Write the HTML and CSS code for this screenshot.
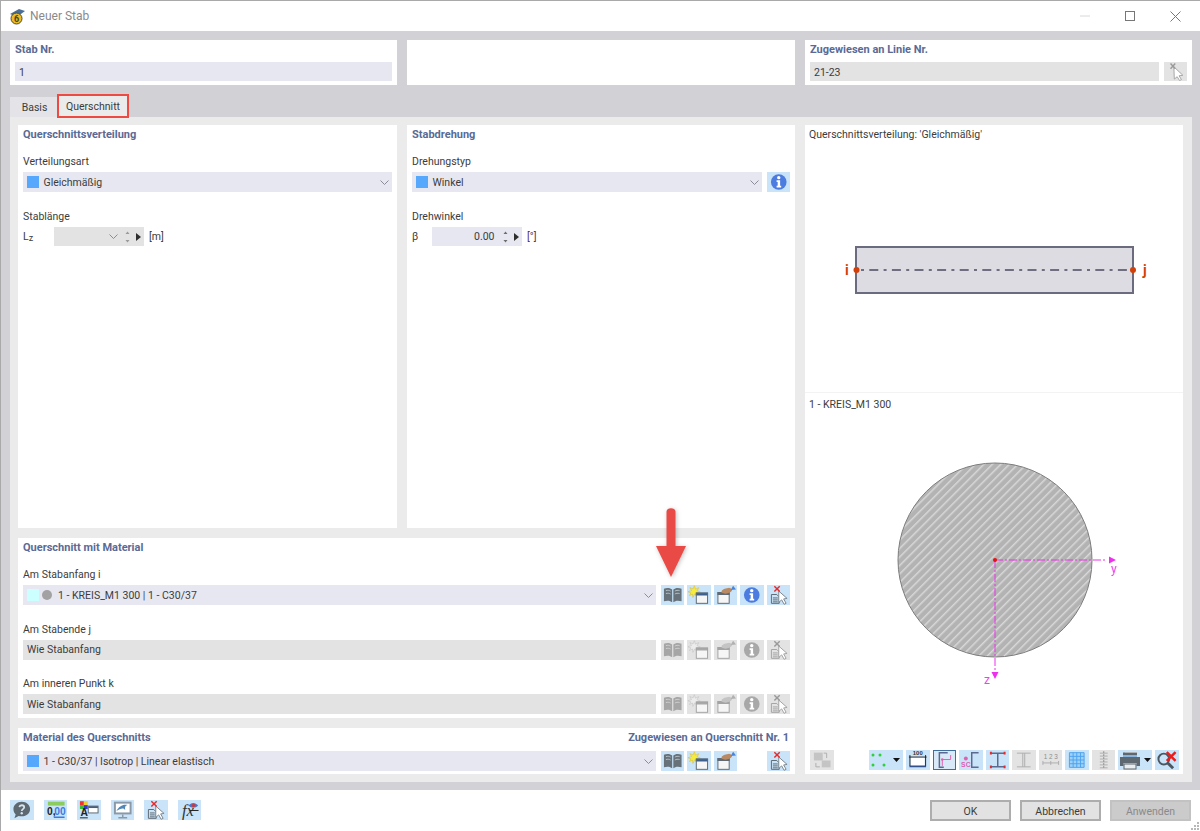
FILE: index.html
```html
<!DOCTYPE html>
<html lang="de">
<head>
<meta charset="utf-8">
<title>Neuer Stab</title>
<link rel="stylesheet" href="styles.css">
</head>
<body>
<svg class="defs" width="0" height="0">
  <symbol id="i-book" viewBox="0 0 24 20">
    <path class="d" d="M3 3.5C6 2.5 9.5 2.5 11.4 4.5V17.5C9.5 15.6 6 15.5 3 16.5Z"/>
    <path class="d" d="M12.6 4.5C14.5 2.5 18 2.5 21 3.5V16.5C18 15.5 14.5 15.6 12.6 17.5Z"/>
    <path class="l" d="M5 5.5C7 5 8.5 5.2 9.8 6M5 8.5C7 8 8.5 8.2 9.8 9M19 5.5C17 5 15.5 5.2 14.2 6M19 8.5C17 8 15.5 8.2 14.2 9"/>
  </symbol>
  <symbol id="i-new" viewBox="0 0 24 20">
    <path class="y" d="M7.5 0.5L8.6 4 12 2.5 10.2 5.6 13.6 7 10 7.800 10.6 11.4 7.800 9 6 12.500 5.600 9 2.600 10.500 4 7.800 1 6.700 4.600 5.500 3 2.400 6.200 3.900Z"/>
    <rect class="w" x="9.5" y="8" width="11.5" height="10.5"/>
    <rect class="n" x="9" y="7.5" width="12.500" height="3"/>
    <rect class="o" x="9.5" y="8" width="11.500" height="10.500"/>
  </symbol>
  <symbol id="i-edit" viewBox="0 0 24 20">
    <rect class="w" x="4" y="7.500" width="11.500" height="11"/>
    <rect class="o" x="4" y="7.500" width="11.500" height="11"/>
    <rect class="o2" x="3.500" y="7" width="12.500" height="3"/>
    <path class="h" d="M8 5.500C10 3 14 3 16.500 2.500L18.500 5.500C17 8 13 9 10.500 8.500L7.500 7.500Z"/>
    <path class="b" d="M17 5L19.500 0.500L22.500 4.500Z"/>
  </symbol>
  <symbol id="i-info" viewBox="0 0 24 20">
    <circle class="inf" cx="12" cy="10" r="8"/>
    <circle class="wf" cx="12" cy="5.600" r="1.700"/>
    <path class="wf" d="M9.800 8.300H13.400V13.800H14.500V15.500H9.800V13.800H10.900V10H9.800Z"/>
  </symbol>
  <symbol id="i-del" viewBox="0 0 24 20">
    <path class="w o" d="M4.500 9.500H10L12.500 12V18.500H4.500Z"/>
    <path class="o" d="M6 13H11M6 15H11M6 17H11"/>
    <path class="wc" d="M12 6L20.500 13.500 17 14 19.500 18.500 17.500 19.500 15 15 12 17.500Z"/>
    <path class="x" d="M7.500 1L13 6.500M13 1L7.500 6.500"/>
  </symbol>
  <symbol id="i-pick" viewBox="0 0 24 20">
    <path class="wc" d="M10 5L19.500 14 15.500 14.500 18 18.500 16 19.500 13.500 15.500 10.500 18Z"/>
    <path class="x" d="M6.500 1.500L11.500 7M11.500 1.500L6.500 7"/>
  </symbol>
  <symbol id="i-transfer" viewBox="0 0 24 20">
    <rect class="gf" x="4" y="2.500" width="9" height="8"/>
    <rect class="gf" x="12" y="10.500" width="9" height="7"/>
    <path class="gl" d="M6 13V17H10M17 8V3H14"/>
  </symbol>
  <symbol id="i-size" viewBox="0 0 24 20">
    <rect class="wf" x="5" y="7" width="14" height="9"/>
    <path class="nl" d="M3.500 16.500H20.500"/>
    <path class="k" d="M4 5V16M20 5V16M3 7H21"/>
    <text class="tiny" x="12" y="5">100</text>
  </symbol>
  <symbol id="i-axes" viewBox="0 0 24 20">
    <path class="c" d="M15 2.500H6.500V17.500H11"/>
    <path class="pk" d="M9.500 9.500H18M18 5V9.500M9.500 9.500V16"/>
    <circle class="pf" cx="9.500" cy="9.500" r="1.300"/>
  </symbol>
  <symbol id="i-sc" viewBox="0 0 24 20">
    <path class="c" d="M20 2.500H13V17.500H20"/>
    <circle class="pf" cx="7" cy="8.500" r="2"/>
    <text class="tinyp" x="7" y="17">SC</text>
  </symbol>
  <symbol id="i-ibeam" viewBox="0 0 24 20">
    <path class="c" d="M5 3H19M5 17H19M12 3V17"/>
    <path class="r" d="M5 1.500V4.500M19 1.500V4.500M5 15.500V18.500M19 15.500V18.500"/>
  </symbol>
  <symbol id="i-ibeam-off" viewBox="0 0 24 20">
    <path class="gl" d="M5 3H19M5 17H19M11 3V17M13 3V17"/>
  </symbol>
  <symbol id="i-num" viewBox="0 0 24 20">
    <text class="tinyg" x="12" y="9">1 2 3</text>
    <path class="gl" d="M4 13H20M4 11V15M20 11V15M12 11V15"/>
  </symbol>
  <symbol id="i-grid" viewBox="0 0 24 20">
    <path class="bl" d="M4.500 2.500H19.500V17.500H4.500ZM4.500 6.300H19.500M4.500 10H19.500M4.500 13.800H19.500M8.300 2.500V17.500M12 2.500V17.500M15.800 2.500V17.500"/>
  </symbol>
  <symbol id="i-list" viewBox="0 0 24 20">
    <path class="gl" d="M8 3H16M8 6H16M8 9H16M8 12H16M8 15H16M8 18H16"/>
    <path class="gd" d="M12 1V19"/>
  </symbol>
  <symbol id="i-print" viewBox="0 0 24 20">
    <rect class="wf" x="7" y="2" width="12" height="7"/>
    <path class="dk" d="M5 2.500H19V7H22V16H18.500V13H5.500V16H2V7H5Z"/>
    <rect class="lg" x="6" y="14" width="12" height="5"/>
    <rect class="lb" x="5" y="5" width="14" height="2"/>
  </symbol>
  <symbol id="i-findx" viewBox="0 0 24 20">
    <circle class="ln" cx="9" cy="9" r="5.500"/>
    <path class="ln2" d="M13 13L18.500 18.500"/>
    <path class="x2" d="M12 2L21 11M21 2L12 11"/>
  </symbol>
  <symbol id="i-help" viewBox="0 0 24 20">
    <path class="dk" d="M12 1.500C17 1.500 20.500 4.800 20.500 9C20.500 13.200 17 16.500 12 16.500C10.800 16.500 9.800 16.300 8.800 16L4.500 18.500L5.800 14.500C4.300 13 3.500 11.200 3.500 9C3.500 4.800 7 1.500 12 1.500Z"/>
    <path class="qm" d="M9.500 7C10 4.500 14.500 4.500 14.500 7.200C14.500 9.200 12 9 12 11"/>
    <circle class="lg2" cx="12" cy="13.300" r="1.200"/>
  </symbol>
  <symbol id="i-zero" viewBox="0 0 24 20">
    <rect class="gr" x="4" y="1.500" width="17" height="4"/>
    <text class="z1" x="3" y="15">0,</text>
    <text class="z2" x="10.500" y="15">00</text>
    <path class="bl2" d="M10 17.500H21"/>
  </symbol>
  <symbol id="i-color" viewBox="0 0 24 20">
    <rect class="c-r" x="3" y="1" width="4" height="4"/>
    <rect class="c-y" x="7" y="1" width="4" height="4"/>
    <rect class="c-g" x="3" y="5" width="4" height="4"/>
    <rect class="c-b" x="7" y="5" width="4" height="4"/>
    <text class="z1" x="3.500" y="16">A</text>
    <rect class="wf" x="11.500" y="6" width="10" height="7"/>
    <rect class="n" x="11.500" y="6" width="10" height="2"/>
    <rect class="o" x="11.500" y="6" width="10" height="7"/>
    <path class="k" d="M3 18H11"/>
  </symbol>
  <symbol id="i-screen" viewBox="0 0 24 20">
    <rect class="scr" x="3" y="1.500" width="18" height="13"/>
    <rect class="wf" x="5" y="3.500" width="14" height="9"/>
    <path class="b2" d="M5.500 11C8 6 13 3.500 17 5C15 5.500 14 6.500 14.500 10C13 7.500 10 8 5.500 11Z"/>
    <path class="scrl" d="M12 14.500V17.500M7.500 18H16.500"/>
  </symbol>
  <symbol id="i-fx" viewBox="0 0 24 20">
    <text class="fxt" x="4" y="16">fx</text>
    <path class="eye" d="M11 5.500C13 2 18 2 20.500 5.500C18 8.500 13 8.500 11 5.500Z"/>
    <circle class="pup" cx="15.800" cy="5.300" r="1.700"/>
    <path class="k" d="M12 10.500H21"/>
  </symbol>
</svg>

<div class="window">
  <header class="titlebar">
    <svg class="logo" viewBox="0 0 17 17" width="17" height="17">
      <path class="logo-hat" d="M1 6L10 1L16 3L8 9Z"/>
      <circle class="logo-coin" cx="7.500" cy="10.500" r="5.500"/>
      <text class="logo-six" x="7.500" y="14">6</text>
    </svg>
    <span class="title-text">Neuer Stab</span>
    <div class="win-ctrls">
      <svg class="win-min" width="10" height="10" viewBox="0 0 10 10"><path d="M0 5H10"/></svg>
      <svg class="win-max" width="10" height="10" viewBox="0 0 10 10"><rect x="0.500" y="0.500" width="9" height="9"/></svg>
      <svg class="win-close" width="11" height="11" viewBox="0 0 11 11"><path d="M0.500 0.500L10.500 10.500M10.500 0.500L0.500 10.500"/></svg>
    </div>
  </header>

  <main class="main">
    <section class="top-row">
      <div class="panel">
        <h2 class="panel-title">Stab Nr.</h2>
        <div class="field field-top"><span>1</span></div>
      </div>
      <div class="panel"></div>
      <div class="panel">
        <h2 class="panel-title">Zugewiesen an Linie Nr.</h2>
        <div class="row">
          <div class="field field-top field-off"><span>21-23</span></div>
          <button class="ib ib-top off"><svg><use href="#i-pick"/></svg></button>
        </div>
      </div>
    </section>

    <nav class="tabs">
      <div class="tab">Basis</div>
      <div class="tab tab-active">Querschnitt</div>
    </nav>

    <section class="page">
      <div class="panel">
        <h2 class="panel-title">Querschnittsverteilung</h2>
        <div class="group">
          <label class="lbl">Verteilungsart</label>
          <div class="field">
            <i class="swatch"></i><span>Gleichmäßig</span>
            <svg class="chev" viewBox="0 0 9 5"><path d="M0.500 0.500L4.500 4.500L8.500 0.500"/></svg>
          </div>
        </div>
        <div class="group">
          <label class="lbl">Stablänge</label>
          <div class="row">
            <span class="sym sym-l">L<sub>z</sub></span>
            <div class="num num-off">
              <span class="num-val"></span>
              <svg class="chev chev-num" viewBox="0 0 9 5"><path d="M0.500 0.500L4.500 4.500L8.500 0.500"/></svg>
              <svg class="spin" viewBox="0 0 5 12"><path d="M2.500 0.500L4.500 3H0.500ZM2.500 11.500L0.500 9H4.500Z"/></svg>
              <svg class="play" viewBox="0 0 5 8"><path d="M0 0L5 4L0 8Z"/></svg>
            </div>
            <span class="unit">[m]</span>
          </div>
        </div>
      </div>

      <div class="panel">
        <h2 class="panel-title">Stabdrehung</h2>
        <div class="group">
          <label class="lbl">Drehungstyp</label>
          <div class="row">
            <div class="field">
              <i class="swatch"></i><span>Winkel</span>
              <svg class="chev" viewBox="0 0 9 5"><path d="M0.500 0.500L4.500 4.500L8.500 0.500"/></svg>
            </div>
            <button class="ib"><svg><use href="#i-info"/></svg></button>
          </div>
        </div>
        <div class="group">
          <label class="lbl">Drehwinkel</label>
          <div class="row">
            <span class="sym">β</span>
            <div class="num">
              <span class="num-val">0.00</span>
              <svg class="spin" viewBox="0 0 5 12"><path d="M2.500 0.500L4.500 3H0.500ZM2.500 11.500L0.500 9H4.500Z"/></svg>
              <svg class="play" viewBox="0 0 5 8"><path d="M0 0L5 4L0 8Z"/></svg>
            </div>
            <span class="unit unit-deg">[°]</span>
          </div>
        </div>
      </div>

      <aside class="panel preview">
        <div class="preview-top">
          <div class="preview-label">Querschnittsverteilung: 'Gleichmäßig'</div>
          <svg class="drawing" width="378" height="250" viewBox="0 0 378 250">
            <rect class="bar" x="51" y="104" width="277" height="46"/>
            <path class="bar-axis" d="M56 127H326"/>
            <circle class="node" cx="51.500" cy="127" r="3"/>
            <circle class="node" cx="328" cy="127" r="3"/>
            <text class="node-lbl" x="40" y="132">i</text>
            <text class="node-lbl" x="338" y="132">j</text>
          </svg>
        </div>
        <div class="preview-bottom">
          <div class="preview-label">1 - KREIS_M1 300</div>
          <svg class="drawing" width="378" height="336" viewBox="0 0 378 336">
            <defs>
              <pattern id="hatch" width="6" height="8" patternUnits="userSpaceOnUse" patternTransform="rotate(45)">
                <rect width="6" height="8" fill="#b3b3b3"/>
                <rect width="1.500" height="8" fill="#d8d8d8"/>
              </pattern>
            </defs>
            <circle class="section" cx="190" cy="147" r="97"/>
            <path class="axis" d="M190 147H302M190 147V258"/>
            <path class="axis-head" d="M304 143.500L311 147L304 150.500ZM186.500 259L190 266L193.500 259Z"/>
            <circle class="centroid" cx="190" cy="147" r="2"/>
            <text class="axis-lbl" x="306" y="160">y</text>
            <text class="axis-lbl" x="179" y="271">z</text>
          </svg>
          <div class="toolbar">
            <button class="ib off"><svg><use href="#i-transfer"/></svg></button>
            <button class="ib ib-wide push">
              <svg class="dots" viewBox="0 0 24 20"><circle cx="4" cy="5" r="1.500"/><circle cx="11" cy="5" r="1.500"/><circle cx="4" cy="15" r="1.500"/><circle cx="15" cy="15" r="1.500"/></svg>
              <svg class="caret" viewBox="0 0 7 4"><path d="M0 0H7L3.500 4Z"/></svg>
            </button>
            <button class="ib"><svg><use href="#i-size"/></svg></button>
            <button class="ib ib-on"><svg><use href="#i-axes"/></svg></button>
            <button class="ib"><svg><use href="#i-sc"/></svg></button>
            <button class="ib"><svg><use href="#i-ibeam"/></svg></button>
            <button class="ib off"><svg><use href="#i-ibeam-off"/></svg></button>
            <button class="ib off"><svg><use href="#i-num"/></svg></button>
            <button class="ib"><svg><use href="#i-grid"/></svg></button>
            <button class="ib off"><svg><use href="#i-list"/></svg></button>
            <button class="ib ib-wide">
              <svg class="print-ic"><use href="#i-print"/></svg>
              <svg class="caret" viewBox="0 0 7 4"><path d="M0 0H7L3.500 4Z"/></svg>
            </button>
            <button class="ib"><svg><use href="#i-findx"/></svg></button>
          </div>
        </div>
      </aside>

      <div class="panel wide sect">
        <h2 class="panel-title">Querschnitt mit Material</h2>
        <div class="group">
          <label class="lbl">Am Stabanfang i</label>
          <div class="row">
            <div class="field">
              <i class="swatch swatch-cyan"></i><i class="dot"></i><span>1 - KREIS_M1 300 | 1 - C30/37</span>
              <svg class="chev" viewBox="0 0 9 5"><path d="M0.500 0.500L4.500 4.500L8.500 0.500"/></svg>
            </div>
            <div class="btns">
              <button class="ib"><svg><use href="#i-book"/></svg></button>
              <button class="ib"><svg><use href="#i-new"/></svg></button>
              <button class="ib"><svg><use href="#i-edit"/></svg></button>
              <button class="ib"><svg><use href="#i-info"/></svg></button>
              <button class="ib"><svg><use href="#i-del"/></svg></button>
            </div>
          </div>
        </div>
        <div class="group">
          <label class="lbl">Am Stabende j</label>
          <div class="row">
            <div class="field field-off"><span>Wie Stabanfang</span></div>
            <div class="btns">
              <button class="ib off"><svg><use href="#i-book"/></svg></button>
              <button class="ib off"><svg><use href="#i-new"/></svg></button>
              <button class="ib off"><svg><use href="#i-edit"/></svg></button>
              <button class="ib off"><svg><use href="#i-info"/></svg></button>
              <button class="ib off"><svg><use href="#i-del"/></svg></button>
            </div>
          </div>
        </div>
        <div class="group">
          <label class="lbl">Am inneren Punkt k</label>
          <div class="row">
            <div class="field field-off"><span>Wie Stabanfang</span></div>
            <div class="btns">
              <button class="ib off"><svg><use href="#i-book"/></svg></button>
              <button class="ib off"><svg><use href="#i-new"/></svg></button>
              <button class="ib off"><svg><use href="#i-edit"/></svg></button>
              <button class="ib off"><svg><use href="#i-info"/></svg></button>
              <button class="ib off"><svg><use href="#i-del"/></svg></button>
            </div>
          </div>
        </div>
      </div>

      <div class="panel wide">
        <div class="title-row">
          <h2 class="panel-title">Material des Querschnitts</h2>
          <h2 class="panel-title">Zugewiesen an Querschnitt Nr. 1</h2>
        </div>
        <div class="row">
          <div class="field">
            <i class="swatch"></i><span>1 - C30/37 | Isotrop | Linear elastisch</span>
            <svg class="chev" viewBox="0 0 9 5"><path d="M0.500 0.500L4.500 4.500L8.500 0.500"/></svg>
          </div>
          <div class="btns">
            <button class="ib"><svg><use href="#i-book"/></svg></button>
            <button class="ib"><svg><use href="#i-new"/></svg></button>
            <button class="ib"><svg><use href="#i-edit"/></svg></button>
            <span class="ib-gap"></span>
            <button class="ib"><svg><use href="#i-del"/></svg></button>
          </div>
        </div>
      </div>
    </section>
  </main>

  <footer class="footer">
    <div class="foot-icons">
      <button class="ib"><svg><use href="#i-help"/></svg></button>
      <button class="ib"><svg><use href="#i-zero"/></svg></button>
      <button class="ib"><svg><use href="#i-color"/></svg></button>
      <button class="ib"><svg><use href="#i-screen"/></svg></button>
      <button class="ib"><svg><use href="#i-del"/></svg></button>
      <button class="ib"><svg><use href="#i-fx"/></svg></button>
    </div>
    <div class="foot-btns">
      <button class="btn">OK</button>
      <button class="btn">Abbrechen</button>
      <button class="btn btn-off">Anwenden</button>
    </div>
  </footer>

  <svg class="callout" width="34" height="74" viewBox="0 0 34 74">
    <path d="M12.500 5.500C12.500 1 21.500 1 21.500 5.500V40H32L17 71L2 40H12.500Z"/>
  </svg>
  <svg class="grip" width="10" height="10" viewBox="0 0 10 10">
    <path d="M7 1h2v2H7zM4 4h2v2H4zM7 4h2v2H7zM1 7h2v2H1zM4 7h2v2H4zM7 7h2v2H7z"/>
  </svg>
</div>
</body>
</html>
```

FILE: styles.css
```css
* { box-sizing: border-box; }
html, body { margin: 0; padding: 0; }
body {
  width: 1200px;
  height: 831px;
  overflow: hidden;
  background: #fff;
  font-family: Roboto, "Noto Sans", sans-serif;
  font-size: 10.500px;
  color: #3c3c3c;
}
.defs { display: none; }

.window {
  position: relative;
  width: 1200px;
  height: 831px;
  display: flex;
  flex-direction: column;
  border-top: 1px solid #a9a9a9;
  border-left: 1px solid #a9a9a9;
  background: #fff;
}

/* Title bar */
.titlebar {
  height: 30px;
  display: flex;
  align-items: center;
  padding-left: 8px;
  flex: none;
}
.logo { flex: none; }
.logo-hat { fill: #4a6f96; }
.logo-coin { fill: #e7bb2c; stroke: #4d4d3a; stroke-width: 1; }
.logo-six { font-size: 9px; font-weight: 700; fill: #4d4020; text-anchor: middle; }
.title-text { margin-left: 4px; font-size: 12px; color: #8a8a8a; }
.win-ctrls {
  margin-left: auto;
  display: flex;
  align-items: center;
  gap: 35px;
  padding-right: 19px;
}
.win-min path { stroke: #d8d8d8; stroke-width: 1; fill: none; }
.win-max rect { stroke: #777; stroke-width: 1; fill: none; }
.win-close path { stroke: #777; stroke-width: 1; fill: none; }

/* Main band */
.main {
  flex: none;
  height: 759px;
  background: #d2d2d6;
  padding: 9px 7px 8px 9px;
  display: flex;
  flex-direction: column;
}
.top-row {
  display: grid;
  grid-template-columns: 387px 388px 387px;
  column-gap: 10px;
  height: 45px;
  flex: none;
  width: 1182px;
}
.panel {
  background: #fff;
  padding: 0 5px;
  min-width: 0;
}
.panel-title {
  margin: 0;
  height: 22px;
  padding-top: 2px;
  line-height: 16px;
  font-size: 11px;
  font-weight: 700;
  color: #5a6a95;
}

/* Tabs */
.tabs {
  flex: none;
  height: 32px;
  display: flex;
  align-items: flex-end;
}
.tab {
  height: 20px;
  width: 47px;
  padding-left: 2px;
  background: #e4e4e8;
  text-align: center;
  line-height: 22px;
  color: #3c3c3c;
}
.tab-active {
  width: 72px;
  height: 24px;
  padding-left: 0;
  margin-bottom: -1px;
  background: #ebebeb;
  border: 2px solid #ee4a44;
  line-height: 22px;
  position: relative;
  z-index: 1;
}

/* Page */
.page {
  flex: none;
  width: 1182px;
  height: 665px;
  background: #ebebeb;
  padding: 8px 9px 8px 8px;
  display: grid;
  grid-template-columns: 379px 388px 378px;
  grid-template-rows: 403px 180px 46px;
  gap: 10px;
}
.wide { grid-column: 1 / span 2; }
.group { margin-top: 16px; }
.sect .group { margin-top: 15.500px; }
.panel-title + .group { margin-top: 6px; }
.lbl {
  display: block;
  height: 16px;
  line-height: 18px;
  margin-bottom: 3px;
  color: #3c3c3c;
}
.row {
  display: flex;
  align-items: center;
  gap: 5px;
}
.field {
  flex: 1;
  min-width: 0;
  height: 20px;
  background: #e7e7f1;
  display: flex;
  align-items: center;
  padding: 0 4px;
  color: #3c3c3c;
}
.field-top { height: 19px; padding-top: 1px; }
.field-off { background: #e3e3e3; }
.swatch {
  flex: none;
  width: 12px;
  height: 12px;
  background: #55a8fb;
  margin-right: 4.500px;
}
.swatch-cyan { background: #ccffff; margin-right: 3px; }
.dot {
  flex: none;
  width: 10px;
  height: 10px;
  border-radius: 50%;
  background: #a2a2a2;
  margin-right: 6px;
}
.chev {
  flex: none;
  margin-left: auto;
  width: 9px;
  height: 5px;
  margin-right: -1px;
}
.chev path { fill: none; stroke: #8b8b99; stroke-width: 1; }
.sym {
  width: 15px;
  flex: none;
}
.sym-l { width: 26px; }
.sym sub { font-size: 9px; line-height: 0; vertical-align: -1px; }
.num {
  width: 90px;
  height: 19px;
  flex: none;
  background: #e7e7f1;
  display: flex;
  align-items: center;
  padding-right: 3.500px;
}
.num-off { background: #e3e3e3; }
.num-val { flex: 1; text-align: right; margin-right: 8px; }
.num-off .num-val { margin-right: 0; }
.num .chev-num { margin-left: 0; margin-right: 7px; }
.spin { width: 5px; height: 12px; flex: none; margin-right: 6px; }
.spin path { fill: #6c6c6c; }
.num-off .spin path { fill: #9a9a9a; }
.play { width: 5px; height: 8px; flex: none; }
.play path { fill: #2e2e2e; }
.unit { color: #3c3c3c; }
.unit-deg { color: #5a3060; }

/* Icon buttons */
.btns { display: flex; gap: 3px; flex: none; }
.ib {
  flex: none;
  width: 23.500px;
  height: 20px;
  padding: 0;
  border: 0;
  background: #c9e3f8;
  display: block;
}
.ib > svg { display: block; width: 100%; height: 100%; }
.ib-top { height: 19px; }
.ib-gap { width: 23.500px; flex: none; }
.ib-on { background: #d9e9f8; outline: 1.500px solid #3f6f9f; outline-offset: -1.500px; }
.ib-wide {
  width: 34px;
  display: flex;
  align-items: center;
}
.ib > svg.dots { width: 24px; height: 20px; flex: none; }
.dots circle { fill: #2ed13a; }
.ib > svg.caret { width: 7px; height: 4px; flex: none; }
.ib > .print-ic + svg.caret { margin-left: 2px; }
.caret path { fill: #111; }
.ib > svg.print-ic { width: 24px; height: 20px; flex: none; }
.off { background: #e3e3e3; }

/* Icon drawing parts */
.d  { fill: var(--dk, #66717a); }
.l  { fill: none; stroke: var(--lt, #b4bec6); stroke-width: 1; }
.y  { fill: var(--yl, #f6ec3a); stroke: var(--yo, #d9b92a); stroke-width: .5; }
.w  { fill: #f6f6f6; }
.wf { fill: #fff; }
.n  { fill: var(--nv, #3c5f8e); }
.o  { fill: none; stroke: var(--gd, #5f6a74); stroke-width: 1; }
.o2 { fill: var(--gd, #5f6a74); }
.h  { fill: var(--hd, #b88962); }
.b  { fill: var(--bu, #4a85d8); }
.inf { fill: var(--in, #4d7ce0); }
.wc { fill: #fff; stroke: var(--gd, #7c8790); stroke-width: 1; }
.x  { fill: none; stroke: var(--rd, #e52b2b); stroke-width: 1.500; }
.off { --dk: #a6a6a6; --lt: #cfcfcf; --yl: #ececec; --yo: #bdbdbd; --nv: #a8a8a8; --gd: #a4a4a4; --hd: #c4c4c4; --bu: #b0b0b0; --in: #a8a8a8; --rd: #9a9a9a; }
.gf { fill: #c4c4c4; }
.gl { fill: none; stroke: #aeaeae; stroke-width: 1; }
.gd { fill: none; stroke: #8e8e8e; stroke-width: 1; stroke-dasharray: 2 1; }
.nl { fill: none; stroke: #34508a; stroke-width: 2; }
.k  { fill: none; stroke: #222; stroke-width: 1; }
.tiny { font-size: 6px; font-weight: 700; fill: #333; text-anchor: middle; }
.tinyp { font-size: 7px; font-weight: 700; fill: #e060b0; text-anchor: middle; }
.tinyg { font-size: 6.500px; fill: #8e8e8e; text-anchor: middle; }
.c  { fill: none; stroke: #5c6a90; stroke-width: 1.500; }
.pk { fill: none; stroke: #e060b0; stroke-width: 1; }
.pf { fill: #e060b0; }
.r  { fill: none; stroke: #e82a2a; stroke-width: 2; }
.bl { fill: #9fd0f8; stroke: #4ea4ee; stroke-width: 1; }
.dk { fill: #5d6870; }
.lg { fill: #e9edf0; stroke: #5d6870; stroke-width: 1; }
.lb { fill: #86b4df; }
.ln { fill: none; stroke: #4b5660; stroke-width: 2; }
.ln2 { fill: none; stroke: #4b5660; stroke-width: 3; }
.x2 { fill: none; stroke: #ea1c1c; stroke-width: 2.500; }
.qm { fill: none; stroke: #d6e3ee; stroke-width: 1.800; }
.lg2 { fill: #d6e3ee; }
.gr { fill: #8ccb5e; }
.z1 { font-size: 10.500px; font-weight: 700; fill: #222; }
.z2 { font-size: 10.500px; font-weight: 700; fill: #3b7be0; }
.bl2 { fill: none; stroke: #3b7be0; stroke-width: 1.500; }
.c-r { fill: #e33; }
.c-y { fill: #ec3; }
.c-g { fill: #3b3; }
.c-b { fill: #33d; }
.scr { fill: #8a99a8; }
.b2 { fill: #4e86b8; }
.scrl { fill: none; stroke: #8a99a8; stroke-width: 1.500; }
.fxt { font-family: "Liberation Serif", serif; font-style: italic; font-size: 17px; fill: #333; }
.eye { fill: #4c78c8; }
.pup { fill: #d33; }

/* Preview panel */
.preview {
  grid-column: 3;
  grid-row: 1 / span 3;
  padding: 0;
  display: flex;
  flex-direction: column;
}
.preview-top {
  flex: none;
  height: 268px;
  border-bottom: 1px solid #f3f3f4;
}
.preview-bottom {
  flex: 1;
  min-height: 0;
}
.preview-label {
  height: 18px;
  line-height: 19px;
  padding-left: 4px;
  color: #3c3c3c;
}
.drawing { display: block; }
.preview-bottom .preview-label { margin-top: 2px; }
.bar { fill: #dcdce2; stroke: #6b6b80; stroke-width: 2; }
.bar-axis { fill: none; stroke: #4a4a60; stroke-width: 1.500; stroke-dasharray: 3 5.300 9 5.300; }
.node { fill: #d2400a; }
.node-lbl { font-size: 14px; font-weight: 700; fill: #d2400a; }
.section { fill: url(#hatch); stroke: #7d7d7d; stroke-width: 1; }
.axis { fill: none; stroke: #ee30ee; stroke-width: 1; stroke-dasharray: 8 2 2 2; }
.axis-head { fill: #ee30ee; }
.centroid { fill: #e81010; }
.axis-lbl { font-size: 12px; fill: #ee40ee; }
.toolbar {
  margin-top: 1px;
  display: flex;
  gap: 3px;
  padding: 0 4.500px 0 5px;
}
.push { margin-left: auto; }

.title-row {
  display: flex;
  justify-content: space-between;
  height: 23px;
  padding: 0 1px 0 0;
}

/* Footer */
.footer {
  flex: 1;
  display: flex;
  justify-content: space-between;
  padding: 10px 9px 0 9px;
}
.foot-icons { display: flex; gap: 10px; height: 20px; }
.foot-btns { display: flex; gap: 9px; }
.btn {
  width: 81px;
  height: 21px;
  padding: 1px 0 0;
  font: inherit;
  color: #3c3c3c;
  background: #e2e2e2;
  border: 2px solid #adadad;
}
.btn-off {
  background: #cbcbcb;
  border-color: #c2c2c2;
  color: #8a8a8a;
}

/* Overlays */
.callout {
  position: absolute;
  left: 653px;
  top: 505px;
  filter: drop-shadow(1px 1px 2px rgba(0, 0, 0, .25));
}
.callout path { fill: #ea4a45; }
.grip { position: absolute; right: 0; bottom: 0; }
.grip path { fill: #b8b8b8; }
```
